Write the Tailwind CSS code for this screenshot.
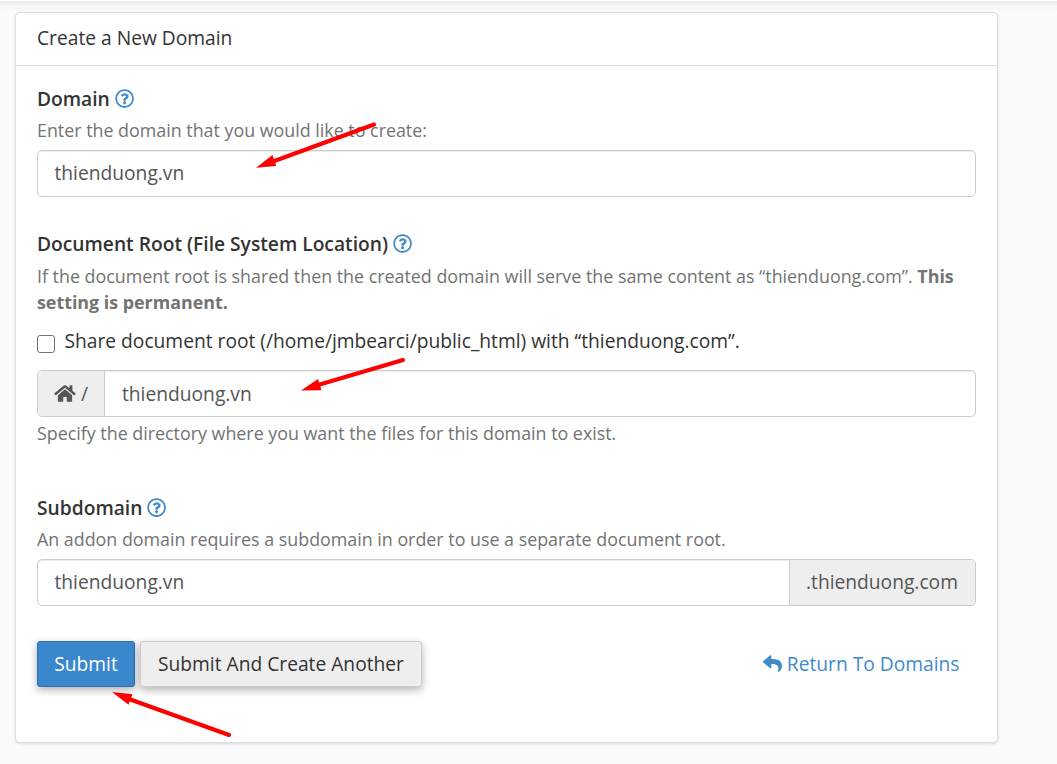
<!DOCTYPE html>
<html lang="en">
<head>
<meta charset="utf-8">
<title>Create a New Domain</title>
<script src="https://cdn.jsdelivr.net/npm/@tailwindcss/browser@4"></script>
</head>
<body class="relative h-[764px] overflow-hidden bg-[#fafafa] font-['Open_Sans',sans-serif] text-[19.22px] text-[#333]">
<svg class="hidden">
  <symbol id="help" viewBox="0 0 512 512"><path d="M256 8C119.043 8 8 119.083 8 256c0 136.997 111.043 248 248 248s248-111.003 248-248C504 119.083 392.957 8 256 8zm0 448c-110.532 0-200-89.431-200-200 0-110.495 89.472-200 200-200 110.491 0 200 89.471 200 200 0 110.53-89.431 200-200 200zm107.244-255.2c0 67.052-72.421 68.084-72.421 92.863V300c0 6.627-5.373 12-12 12h-45.647c-6.627 0-12-5.373-12-12v-8.659c0-35.745 27.1-50.034 47.579-61.516 17.561-9.845 28.324-16.541 28.324-29.579 0-17.246-21.999-28.693-39.784-28.693-23.189 0-33.894 10.977-48.942 29.969-4.057 5.12-11.46 6.071-16.666 2.124l-27.824-21.098c-5.107-3.872-6.251-11.066-2.644-16.363C184.846 131.491 214.94 112 261.794 112c49.071 0 101.45 38.304 101.45 88.8zM298 368c0 23.159-18.841 42-42 42s-42-18.841-42-42 18.841-42 42-42 42 18.841 42 42z"/></symbol>
</svg>
<div class="h-px bg-white"></div>
<div class="h-[11px] bg-linear-to-b from-[#e8e8e8] via-[#f6f6f6] via-40% to-[#fafafa]"></div>

<main class="ml-[15px] h-[731px] w-[983px] rounded-[5px] border border-[#ddd] bg-white shadow-[0_1px_3px_rgba(0,0,0,0.12)]">
  <h1 class="h-[53px] border-b border-[#ddd] pt-[11px] pl-[21px] leading-7">Create a New Domain</h1>
  <form class="px-[21px] pt-[18px]">
    <section class="h-[145px]">
      <h2 class="flex h-[33px] gap-[5px] pt-px font-semibold leading-7">Domain
        <svg class="mt-[4px] size-[19.2px] fill-[#428bca]"><use href="#help"/></svg></h2>
      <p class="h-[33px] text-[17.85px] leading-[26px] text-[#737373]">Enter the domain that you would like to create:</p>
      <div class="h-[47px] rounded-[5px] border border-[#ccc] pl-[16.5px] leading-[44px] text-[#555] shadow-[inset_0_1px_1px_rgba(0,0,0,0.075)]">thienduong.vn</div>
    </section>
    <section class="h-[264px]">
      <h2 class="flex h-[34px] gap-[5px] pt-px font-semibold leading-7">Document Root (File System Location)
        <svg class="mt-[4px] size-[19.2px] fill-[#428bca]"><use href="#help"/></svg></h2>
      <div class="h-[63px] text-[17.85px] leading-[26px] text-[#737373]">
        <p>If the document root is shared then the created domain will serve the same content as “thienduong.com”. <b>This</b></p>
        <p class="font-bold">setting is permanent.</p>
      </div>
      <label class="flex h-[44px] gap-[9.5px] pt-px leading-7"><span class="mt-[8px] size-[18px] rounded-[3px] border-[1.5px] border-[#767676] bg-white"></span>Share document root (/home/jmbearci/public_html) with “thienduong.com”.</label>
      <div class="flex h-[47px] rounded-[5px] border border-[#ccc] leading-[46px] text-[#555]">
        <span class="flex w-[67px] gap-[5px] rounded-l-[4px] border-r border-[#ccc] bg-[#eee] pl-[16px]">
          <svg class="mt-[13px] h-[19px] w-[22px] fill-[#555]" viewBox="0 0 576 512"><path d="M280.37 148.26L96 300.11V464a16 16 0 0 0 16 16l112.06-.29a16 16 0 0 0 15.92-16V368a16 16 0 0 1 16-16h64a16 16 0 0 1 16 16v95.64a16 16 0 0 0 16 16.05L464 480a16 16 0 0 0 16-16V300L295.67 148.26a12.19 12.19 0 0 0-15.3 0zM571.6 251.47L488 182.56V44.05a12 12 0 0 0-12-12h-56a12 12 0 0 0-12 12v72.61L318.47 43a48 48 0 0 0-61 0L4.34 251.47a12 12 0 0 0-1.6 16.9l25.5 31A12 12 0 0 0 45.15 301l235.22-193.74a12.19 12.19 0 0 1 15.3 0L530.9 301a12 12 0 0 0 16.9-1.6l25.5-31a12 12 0 0 0-1.7-16.93z"/></svg>/</span>
        <span class="h-[45px] flex-1 rounded-r-[4px] pl-[17px] shadow-[inset_0_1px_1px_rgba(0,0,0,0.075)]">thienduong.vn</span>
      </div>
      <p class="pt-[3px] text-[17.85px] leading-[26px] text-[#737373]">Specify the directory where you want the files for this domain to exist.</p>
    </section>
    <section class="h-[148px]">
      <h2 class="flex h-[33px] gap-[5px] pt-px font-semibold leading-7">Subdomain
        <svg class="mt-[4px] size-[19.2px] fill-[#428bca]"><use href="#help"/></svg></h2>
      <p class="h-[33px] text-[17.85px] leading-[26px] text-[#737373]">An addon domain requires a subdomain in order to use a separate document root.</p>
      <div class="flex h-[47px] rounded-[5px] border border-[#ccc] leading-[44px] text-[#555]">
        <span class="flex-1 rounded-l-[4px] pl-[16.5px] shadow-[inset_0_1px_1px_rgba(0,0,0,0.075)]">thienduong.vn</span>
        <span class="w-[186px] rounded-r-[4px] border-l border-[#ccc] bg-[#eee] pl-[16px]">.thienduong.com</span>
      </div>
    </section>
    <div class="flex h-[46px] gap-[5px] leading-[44px]">
      <button type="button" class="w-[98px] rounded-[3px] border border-[#2f6fab] bg-[#3a87cd] text-white shadow-[0_3px_8px_rgba(0,0,0,0.3)]">Submit</button>
      <button type="button" class="w-[282px] rounded-[3px] border border-[#ccc] bg-[#eee] shadow-[0_3px_8px_rgba(0,0,0,0.3)]">Submit And Create Another</button>
      <a class="mr-[16.5px] ml-auto flex gap-[5px] leading-[46px] text-[#428bca]"><svg class="mt-[13px] size-[19px] fill-[#428bca]" viewBox="0 0 512 512"><path d="M8.309 189.836L184.313 37.851C199.719 24.546 224 35.347 224 56.015v80.053c160.629 1.839 288 34.032 288 186.258 0 61.441-39.581 122.309-83.333 154.132-13.653 9.931-33.111-2.533-28.077-18.631 45.344-145.012-21.507-183.51-176.59-185.742V360c0 20.7-24.3 31.453-39.687 18.164l-176.004-152c-11.071-9.562-11.086-26.753 0-36.328z"/></svg>Return To Domains</a>
    </div>
  </form>
</main>

<!-- Red annotation arrows -->
<svg class="pointer-events-none absolute top-0 left-0 h-[764px] w-[1057px] fill-[#f00] stroke-[#f00]" viewBox="0 0 1057 764">
  <g stroke-width="4" stroke-linecap="round"><path d="M374 124.5L273 161.5M403 360L318 385M229 735L129 699"/></g>
  <g stroke="none"><path d="M256 167.8L272.5 155L276.3 166zM301 390.5L318 379L321.5 390.3zM112 692L132.5 694.3L128.5 704.8z"/></g>
</svg>
</body>
</html>
